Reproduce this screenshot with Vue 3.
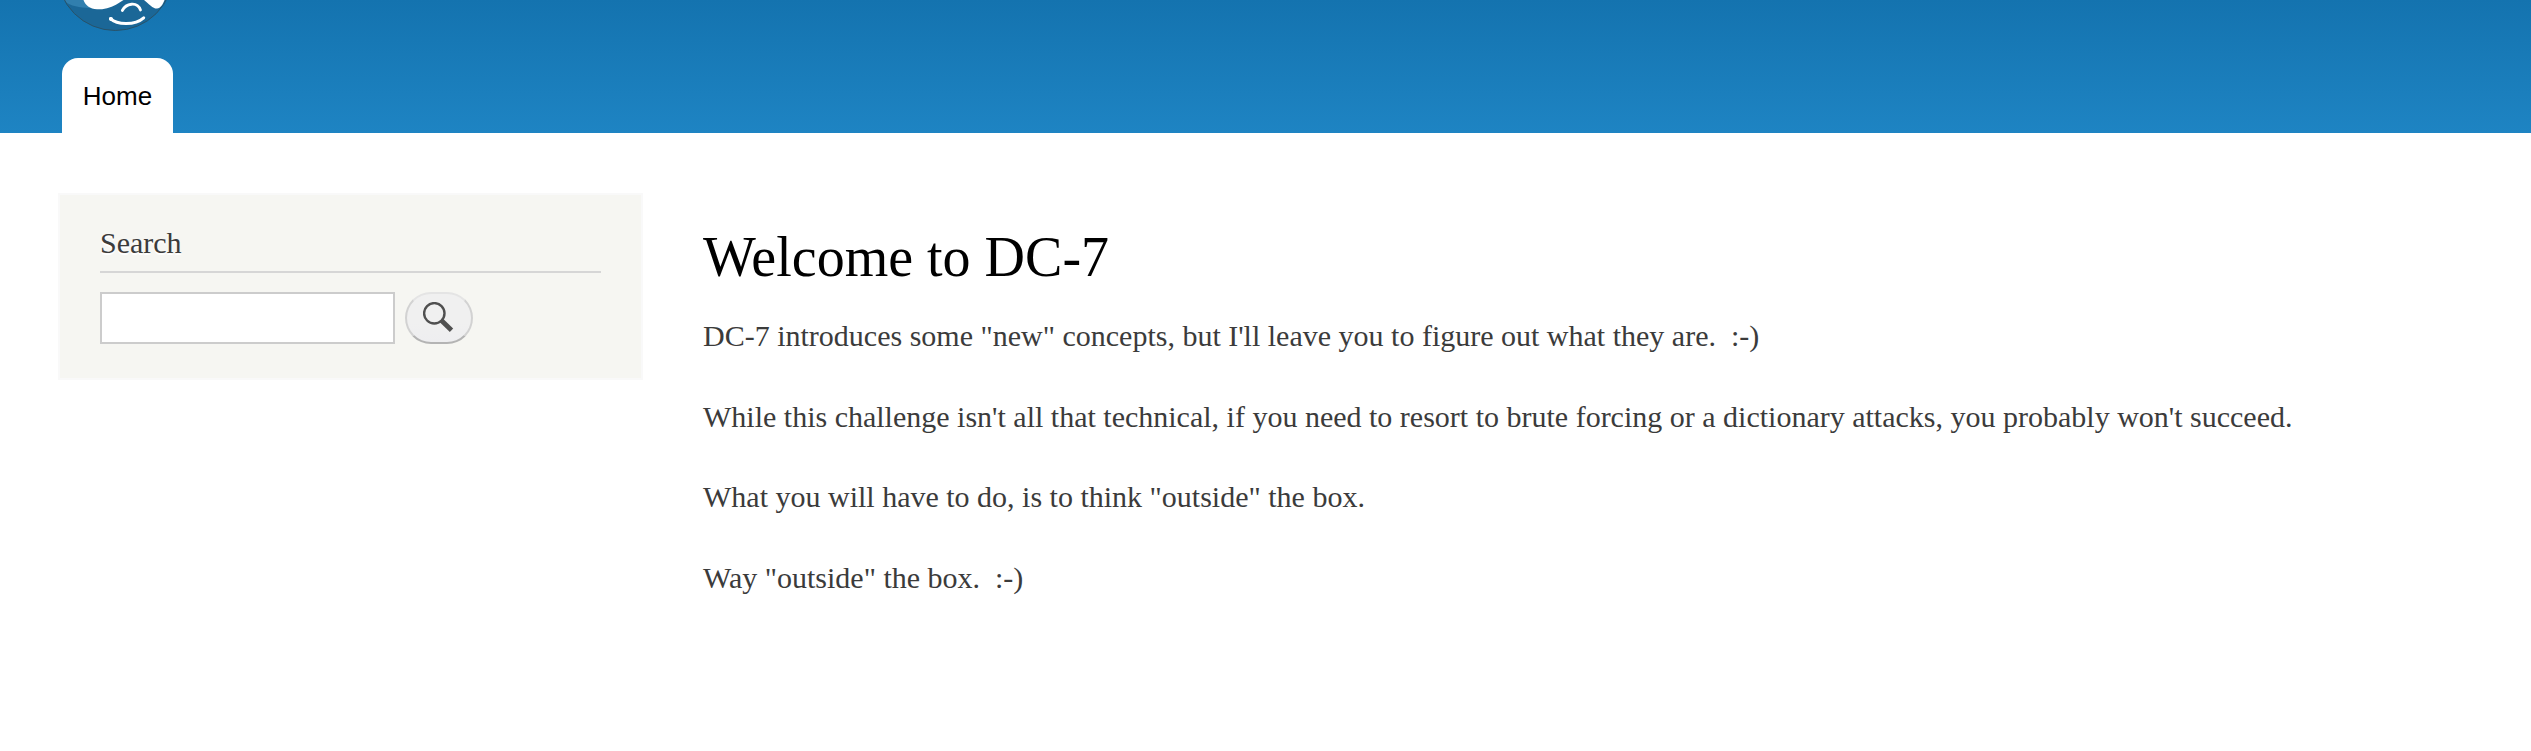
<script setup>
const paragraphs = [
  'DC-7 introduces some "new" concepts, but I\'ll leave you to figure out what they are.\u00a0 :-)',
  "While this challenge isn't all that technical, if you need to resort to brute forcing or a dictionary attacks, you probably won't succeed.",
  'What you will have to do, is to think "outside" the box.',
  'Way "outside" the box.\u00a0 :-)',
]
</script>

<template>
  <div class="page">
    <header class="header">
      <a class="logo" aria-label="Home">
        <svg width="130" height="34" viewBox="0 0 130 34">
          <defs>
            <clipPath id="drop"><circle cx="65.3" cy="-27.5" r="58" /></clipPath>
          </defs>
          <g clip-path="url(#drop)">
            <rect width="130" height="34" fill="#1b6797" />
            <path d="M10 0H44C44 3 46 6 49 7.500C35 8.500 22 8 13 0Z" fill="#317fae" />
            <path d="M33.500 0C35 5 40 9 47 9.200C55 10 62 7 68 3.500L73.500 0Z" fill="#fff" />
            <path d="M94 0C99 4 103 8.800 107 8.600C110.500 8.400 113 4 114.500 0Z" fill="#fff" />
          </g>
          <path d="M72.300 10.500C76 3.500 87 1 90.500 10" fill="none" stroke="#fff" stroke-width="2.800" stroke-linecap="round" />
          <path d="M60.500 18.600C67 25 85 25.500 93.700 17.800" fill="none" stroke="#fff" stroke-width="3" stroke-linecap="round" />
          <circle cx="61" cy="18.900" r="2" fill="#fff" />
          <circle cx="65.300" cy="-27.500" r="58" fill="none" stroke="#285269" />
        </svg>
      </a>
      <nav class="tabs"><a class="tab">Home</a></nav>
    </header>
    <main class="main">
      <aside class="block">
        <h2>Search</h2>
        <form class="form" @submit.prevent>
          <input type="search" class="field" aria-label="Search" />
          <button type="submit" class="button" aria-label="Search">
            <svg width="32" height="32" viewBox="0 0 32 32">
              <circle cx="11.300" cy="11.300" r="10.200" fill="none" stroke="#505050" stroke-width="2.400" />
              <path d="M18.200 18.200L28.500 28.200" stroke="#505050" stroke-width="4.800" />
            </svg>
          </button>
        </form>
      </aside>
      <article class="content">
        <h1>Welcome to DC-7</h1>
        <p v-for="text in paragraphs" :key="text">{{ text }}</p>
      </article>
    </main>
  </div>
</template>

<style>
body {
  margin: 0;
  background: #fff;
}
</style>

<style scoped>
.page {
  width: 100%;
  height: 751px;
  overflow: hidden;
  font-family: "Liberation Serif", serif;
  color: #3b3b3b;
}
.header {
  height: 133px;
  padding-left: 50px;
  box-sizing: border-box;
  background: linear-gradient(#1473af, #1e84c3);
}
.logo,
.logo svg {
  display: block;
  height: 34px;
}
.tabs {
  display: flex;
  padding: 24px 0 0 12px;
}
.tab {
  width: 111px;
  height: 75px;
  box-sizing: border-box;
  padding-top: 1px;
  border-radius: 16px 16px 0 0;
  background: #fff;
  color: #000;
  font: 26px/74px "Liberation Sans", sans-serif;
  text-align: center;
}
.main {
  display: flex;
  align-items: flex-start;
  gap: 60px;
  padding: 60px 58px 0;
}
.block {
  width: 585px;
  height: 187px;
  box-sizing: border-box;
  padding: 30px 40px;
  border: 2px solid #f9f9f9;
  background: #f6f6f2;
}
h2 {
  height: 46px;
  margin: 0 0 19px;
  border-bottom: 2px solid #d6d6d6;
  font-size: 30px;
  font-weight: 400;
  line-height: 36px;
  text-shadow: 0 2px 0 #fff;
}
.form {
  display: flex;
  gap: 10px;
}
.field {
  width: 295px;
  height: 52px;
  box-sizing: border-box;
  padding: 4px;
  border: 2px solid #ccc;
  border-radius: 0;
  background: #fff;
  outline: none;
  appearance: none;
}
.button {
  display: flex;
  width: 68px;
  height: 52px;
  box-sizing: border-box;
  padding: 8px 0 0 16px;
  border: 2px solid;
  border-color: #e4e4e4 #d2d2d2 #b4b4b4;
  border-radius: 26px;
  background: linear-gradient(#f0f0f0 60%, #eeeef0);
}
.content {
  padding-top: 30px;
}
h1 {
  margin: 0 0 22px;
  color: #000;
  font-size: 56px;
  font-weight: 400;
  line-height: 68px;
}
p {
  margin: 0 0 34.600px;
  font-size: 30px;
  line-height: 46px;
  white-space: nowrap;
}
</style>
